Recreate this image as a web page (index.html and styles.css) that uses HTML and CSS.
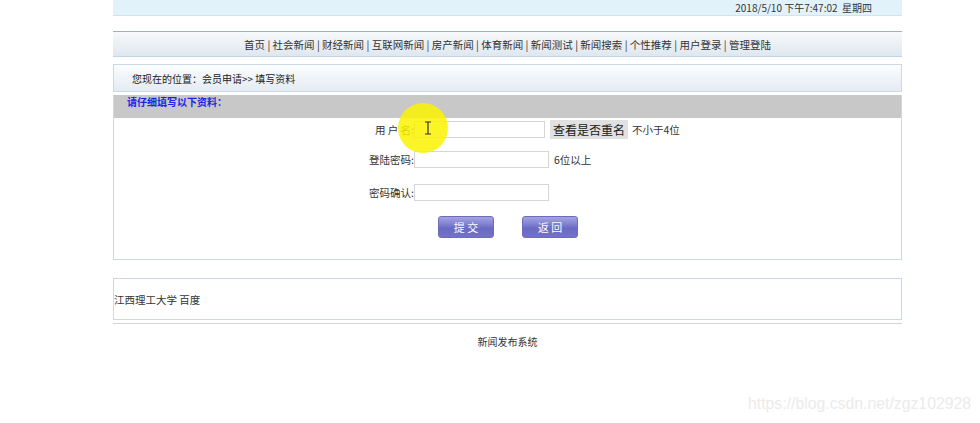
FILE: index.html
```html
<!DOCTYPE html>
<html lang="zh">
<head>
<meta charset="utf-8">
<title>会员申请</title>
<link rel="stylesheet" href="styles.css">
</head>
<body>
<div class="page">
  <div class="topbar"><span class="date">2018/5/10 下午7:47:02&nbsp;&nbsp;星期四</span></div>
  <div class="nav">首页 | 社会新闻 | 财经新闻 | 互联网新闻 | 房产新闻 | 体育新闻 | 新闻测试 | 新闻搜索 | 个性推荐 | 用户登录 | 管理登陆</div>
  <div class="location">您现在的位置：会员申请&gt;&gt; 填写资料</div>
  <div class="panel">
    <div class="panel-head">请仔细填写以下资料：</div>
    <div class="form">
      <div class="row r1">
        <label class="lab">用 户 名:</label>
        <span class="field"><input class="inp w1" type="text"></span>
        <button class="check" type="button">查看是否重名</button>
        <span class="hint">不小于4位</span>
      </div>
      <div class="row r2">
        <label class="lab">登陆密码:</label>
        <span class="field"><input class="inp w2" type="password"></span>
        <span class="hint h2">6位以上</span>
      </div>
      <div class="row r3">
        <label class="lab">密码确认:</label>
        <span class="field"><input class="inp w2" type="password"></span>
      </div>
      <div class="btns">
        <button class="pbtn" type="button">提 交</button>
        <button class="pbtn" type="button">返 回</button>
      </div>
    </div>
    <div class="highlight"></div>
    <svg class="cursor" width="8" height="14" viewBox="0 0 8 14"><path d="M1 1h6M4 1v12M1 13h6" stroke="#333" stroke-width="1.2" fill="none"/></svg>
  </div>
  <div class="footer-box"><span>江西理工大学 百度</span></div>
  <div class="footer-line"></div>
  <div class="copy">新闻发布系统</div>
</div>
<div class="watermark">https://blog.csdn.net/zgz102928</div>
</body>
</html>
```
FILE: styles.css
```css
html, body {
  margin: 0;
  padding: 0;
  background: #fff;
}
body {
  font-family: "Noto Sans CJK SC", "Noto Sans", sans-serif;
  font-size: 10.5px;
  color: #333;
  position: relative;
  height: 423px;
  overflow: hidden;
}
.page {
  width: 789px;
  margin-left: 113px;
}
.topbar {
  height: 15px;
  background: #e2f2fb;
  border-bottom: 1px solid #d3e3ee;
  display: flex;
  justify-content: flex-end;
  align-items: center;
  padding-right: 30px;
}
.date {
  font-size: 10px;
  line-height: 15px;
  color: #333;
}
.nav {
  margin-top: 15px;
  height: 24px;
  border-top: 1px solid #9db0c4;
  border-bottom: 1px solid #c2d4e3;
  background: linear-gradient(#f7f9fb, #dfe7ef);
  text-align: center;
  line-height: 25px;
  font-size: 10.5px;
  color: #333;
}
.location {
  margin-top: 7px;
  height: 26px;
  border: 1px solid #c8d9e8;
  background: linear-gradient(#fcfdfe, #e3ebf3);
  line-height: 27px;
  padding-left: 18px;
  font-size: 10px;
  color: #222;
}
.panel {
  margin-top: 3px;
  border: 1px solid #c8d9e8;
  border-top: none;
  position: relative;
}
.panel-head {
  height: 23px;
  background: #c8c8c8;
  color: #1d22e6;
  font-weight: bold;
  font-size: 10px;
  line-height: 14px;
  padding-left: 13px;
}
.form {
  height: 140px;
  padding-left: 200px;
  position: relative;
}
.row {
  display: flex;
  align-items: center;
  height: 20px;
}
.r1 { margin-top: 1px; }
.r2 { margin-top: 10px; }
.r3 { margin-top: 13px; }
.lab {
  width: 100px;
  text-align: right;
  font-size: 10.5px;
  color: #333;
}
.inp {
  box-sizing: border-box;
  height: 17px;
  border: 1px solid #d6d6d6;
  background: #fff;
  padding: 0;
  margin: 0;
  display: block;
}
.w1 { width: 131px; }
.w2 { width: 135px; }
.check {
  margin-left: 5px;
  height: 19px;
  width: 78px;
  border: none;
  background: #e1e1e1;
  font-family: "Noto Sans CJK SC", sans-serif;
  font-size: 12px;
  color: #1a1a1a;
  padding: 0;
}
.hint {
  margin-left: 4px;
  font-size: 10.5px;
  color: #333;
}
.h2 { margin-left: 5px; }
.btns {
  display: flex;
  gap: 28px;
  margin-top: 14px;
  padding-left: 124px;
}
.pbtn {
  width: 56px;
  height: 22px;
  border: 1px solid #6c6cb8;
  border-radius: 3px;
  background: linear-gradient(#a4a4e4 0%, #7878cc 45%, #6a6ac4 55%, #7272c8 100%);
  color: #fff;
  font-family: "Noto Sans CJK SC", sans-serif;
  font-size: 11px;
  padding: 0;
}
.highlight {
  position: absolute;
  left: 284px;
  top: 8px;
  width: 50px;
  height: 50px;
  border-radius: 50%;
  background: rgba(250, 242, 0, 0.85);
  pointer-events: none;
}
.cursor {
  position: absolute;
  left: 310px;
  top: 26px;
}
.footer-box {
  margin-top: 18px;
  height: 40px;
  border: 1px solid #c8d9e8;
  display: flex;
  align-items: center;
  font-size: 10.5px;
  color: #333;
}
.footer-line {
  margin-top: 3px;
  height: 0;
  border-top: 1px solid #d4d4d4;
}
.copy {
  margin-top: 10px;
  text-align: center;
  font-size: 10px;
  color: #333;
}
.watermark {
  position: absolute;
  left: 748px;
  top: 395px;
  font-family: "Liberation Sans", Arial, sans-serif;
  font-size: 15.8px;
  color: #ebebeb;
}
```
